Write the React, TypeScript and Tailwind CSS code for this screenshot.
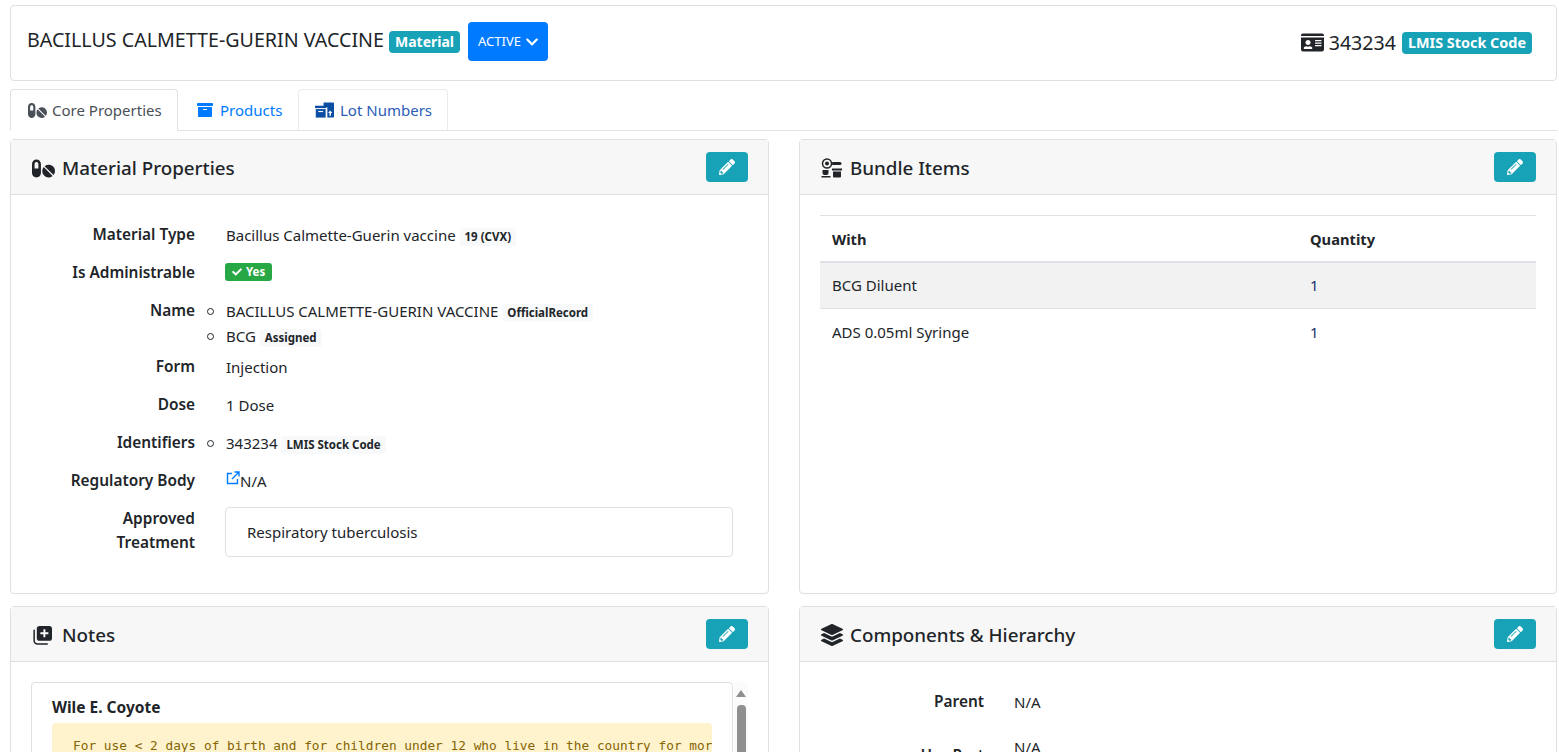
import React from 'react';
import { FaPills, FaArchive, FaPencilAlt, FaIdCard, FaLayerGroup, FaCheck, FaChevronDown } from 'react-icons/fa';

const Tag: React.FC<{ children: React.ReactNode }> = ({ children }) => (
  <span className="inline-block rounded-[3px] bg-[#f8f9fa] px-[5px] text-[11.5px] font-bold leading-[18px] text-[#212529]">{children}</span>
);

const EditButton = () => (
  <button className="flex h-[30px] w-[42px] items-center justify-center rounded-[4px] bg-[#17a2b8] text-white">
    <FaPencilAlt className="text-[16px]" />
  </button>
);

const LotIcon = () => (
  <svg viewBox="0 0 20 16" className="h-[16px] w-[19px]" fill="#0b4ea2">
    <path d="M9 0h10a1 1 0 0 1 1 1v14a1 1 0 0 1-1 1h-6V5H9z" />
    <rect x="0" y="3.5" width="12" height="2.5" />
    <path d="M.8 7h10.4v9H.8z" />
    <rect x="3.5" y="9" width="5" height="1.2" fill="#fff" />
    <path d="M16 8.5l2.2 2.6h-1.4V14h-1.6v-2.9h-1.4z" fill="#fff" />
  </svg>
);

const BundleIcon = () => (
  <svg viewBox="0 0 22 20" className="h-[20px] w-[22px]" fill="#212529">
    <circle cx="6" cy="5.5" r="4.5" fill="none" stroke="#212529" strokeWidth="1.5" />
    <circle cx="6" cy="5.5" r="2" />
    <rect x="10.5" y="4" width="10" height="3" rx="1.5" />
    <path d="M1.5 12h6v3a2 2 0 0 1-2 2h-2a2 2 0 0 1-2-2z" />
    <rect x="0.5" y="18" width="9" height="1.5" />
    <rect x="11" y="10.5" width="10" height="2" />
    <path d="M12 13.5h8v5a1 1 0 0 1-1 1h-6a1 1 0 0 1-1-1z" />
  </svg>
);

const NotesIcon = () => (
  <svg viewBox="0 0 20 20" className="ml-[1px] mr-[3px] h-[19px] w-[19px]" fill="#212529">
    <path d="M1.2 4.5v11A3.5 3.5 0 0 0 4.7 19h10.3" fill="none" stroke="#212529" strokeWidth="1.6" strokeLinecap="round" />
    <path d="M7 0h10a3 3 0 0 1 3 3v9.5a3 3 0 0 1-3 3H7a3 3 0 0 1-3-3V3a3 3 0 0 1 3-3z" />
    <path d="M11 3.5h2v3.2h3.2v2H13v3.2h-2V8.700H7.800v-2H11z" fill="#fff" />
  </svg>
);

const ExternalIcon = () => (
  <svg viewBox="0 0 14 14" className="mt-[-6px] h-[14px] w-[14px] shrink-0" fill="none" stroke="#007bff" strokeWidth="1.4">
    <path d="M6 2.500H1.500v10h10V8" />
    <path d="M6 8l6.500-6.500M8.500 1h4.500v4.500" />
  </svg>
);

const Row: React.FC<{ label: React.ReactNode; className?: string; children: React.ReactNode }> = ({ label, className, children }) => (
  <div className={`flex ${className ?? 'mb-[14px]'}`}>
    <div className="w-[164px] shrink-0 text-right text-[15.4px] font-semibold leading-[24px] text-[#212529]">{label}</div>
    <div className="min-w-0 flex-1 pl-[31px] leading-[24px]">{children}</div>
  </div>
);

const ListItem: React.FC<{ children: React.ReactNode }> = ({ children }) => (
  <li className="relative h-[25px] leading-[24px]">
    <span className="absolute left-[-19px] top-[9px] h-[7px] w-[7px] rounded-full border border-[#212529]" />
    {children}
  </li>
);

const Card: React.FC<{ icon: React.ReactNode; title: string; className?: string; children: React.ReactNode }> = ({ icon, title, className, children }) => (
  <section className={`flex flex-col rounded-[4px] border border-[#dfdfdf] bg-white ${className ?? ''}`}>
    <header className="flex h-[55px] shrink-0 items-center justify-between border-b border-[#dfdfdf] bg-[#f7f7f7] pl-[21px] pr-[20px]">
      <h2 className="mt-[2px] flex items-center gap-[7px] text-[18.800px] font-medium text-[#212529]">
        {icon}
        {title}
      </h2>
      <EditButton />
    </header>
    {children}
  </section>
);

export default function App() {
  return (
    <div className="h-[752px] overflow-hidden bg-white pl-[10px] pr-[2px] pt-[5px] text-[15px] text-[#212529] [font-family:'Noto_Sans','Open_Sans',sans-serif]">
      {/* Title bar */}
      <div className="flex h-[76px] items-center justify-between rounded-[4px] border border-[#dfdfdf] pl-[16px] pr-[24px]">
        <div className="flex items-center pb-[3px]">
          <span className="-mt-[4px] text-[19.660px]">BACILLUS CALMETTE-GUERIN VACCINE</span>
          <span className="ml-[5px] rounded-[4px] bg-[#17a2b8] px-[6px] text-[14px] font-bold leading-[22px] text-white">Material</span>
          <button className="ml-[8px] flex h-[39px] w-[80px] items-center gap-[4px] rounded-[4px] bg-[#007bff] pl-[10px] text-[13px] text-white">
            ACTIVE <FaChevronDown className="text-[14px]" />
          </button>
        </div>
        <div className="flex items-center">
          <FaIdCard className="mr-[5px] text-[23px] text-[#212529]" />
          <span className="text-[19.600px]">343234</span>
          <span className="ml-[6px] rounded-[4px] bg-[#17a2b8] px-[6px] text-[14.400px] font-bold leading-[22px] text-white">LMIS Stock Code</span>
        </div>
      </div>

      {/* Tabs */}
      <div className="mt-[8px] flex h-[42px] border-b border-[#dee2e6] text-[15px]">
        <div className="-mb-px flex h-[42px] w-[168px] items-center gap-[5px] rounded-t-[4px] border border-b-white border-[#dee2e6] bg-white pl-[17px] text-[#495057]">
          <FaPills className="text-[19px]" /> Core Properties
        </div>
        <div className="flex h-[42px] w-[120px] items-center gap-[7px] pl-[19px] text-[#007bff]">
          <FaArchive className="text-[16px]" /> Products
        </div>
        <div className="flex h-[41px] w-[150px] items-center gap-[6px] rounded-t-[4px] border border-b-0 border-[#e9ecef] pl-[16px] text-[#2b5cb8]">
          <LotIcon /> Lot Numbers
        </div>
      </div>

      {/* Panels */}
      <div className="mt-[8px] grid grid-cols-[759px_758px] gap-x-[30px] gap-y-[12px]">
        <Card icon={<FaPills className="text-[23px]" />} title="Material Properties" className="h-[455px]">
          <div className="pl-[20px] pr-[35px] pt-[28px]">
            <Row label="Material Type">
              Bacillus Calmette-Guerin vaccine <Tag>19 (CVX)</Tag>
            </Row>
            <Row label="Is Administrable">
              <span className="-ml-[1px] inline-flex h-[18px] items-center gap-[4px] rounded-[3px] bg-[#28a745] px-[7px] align-[2px] text-[11.5px] font-bold text-white">
                <FaCheck className="text-[10px]" /> Yes
              </span>
            </Row>
            <Row label="Name" className="mb-[6px]">
              <ul>
                <ListItem>BACILLUS CALMETTE-GUERIN VACCINE <Tag>OfficialRecord</Tag></ListItem>
                <ListItem>BCG <Tag>Assigned</Tag></ListItem>
              </ul>
            </Row>
            <Row label="Form">Injection</Row>
            <Row label="Dose">1 Dose</Row>
            <Row label="Identifiers" className="mb-[13px]">
              <ul>
                <ListItem>343234 <Tag>LMIS Stock Code</Tag></ListItem>
              </ul>
            </Row>
            <Row label="Regulatory Body">
              <span className="flex items-center">
                <ExternalIcon />
                N/A
              </span>
            </Row>
            <Row label={<>Approved<br />Treatment</>} className="mb-0">
              <div className="-ml-[1px] flex h-[50px] items-center rounded-[4px] border border-[#dfdfdf] pl-[21px]">Respiratory tuberculosis</div>
            </Row>
          </div>
        </Card>

        <Card icon={<BundleIcon />} title="Bundle Items" className="h-[455px]">
          <div className="px-[20px] pt-[20px]">
            <table className="w-full border-t border-[#dee2e6]">
              <thead>
                <tr className="h-[46px] border-b-2 border-[#dee2e6] text-left text-[14.700px]">
                  <th className="w-[478px] pl-[12px] pt-[2px] font-bold">With</th>
                  <th className="pl-[12px] pt-[2px] font-bold">Quantity</th>
                </tr>
              </thead>
              <tbody>
                <tr className="h-[47px] border-b border-[#dee2e6] bg-[#f2f2f2]">
                  <td className="pl-[12px]">BCG Diluent</td>
                  <td className="pl-[12px] text-[#1a2f6b]">1</td>
                </tr>
                <tr className="h-[47px]">
                  <td className="pl-[12px]">ADS 0.05ml Syringe</td>
                  <td className="pl-[12px] text-[#1a2f6b]">1</td>
                </tr>
              </tbody>
            </table>
          </div>
        </Card>

        <Card icon={<NotesIcon />} title="Notes" className="h-[300px]">
          <div className="flex pl-[20px] pr-[20px] pt-[20px]">
            <div className="h-[260px] w-[702px] shrink-0 overflow-hidden rounded-[4px] border border-[#dfdfdf] px-[20px] pt-[12px]">
              <div className="text-[15.500px] font-bold leading-[24px]">Wile E. Coyote</div>
              <div className="mt-[4px] h-[200px] overflow-hidden whitespace-nowrap rounded-[4px] bg-[#fff3cd] pl-[21px] pt-[13px] text-[12.800px] leading-[19px] text-[#856404] [font-family:'DejaVu_Sans_Mono','Liberation_Mono',monospace]">
                For use &lt; 2 days of birth and for children under 12 who live in the country for more than 3 months
              </div>
            </div>
            <div className="ml-[1px] flex h-[260px] w-[14px] flex-col items-center bg-[#fbfbfb] pt-[8px]">
              <span className="h-0 w-0 border-x-[5px] border-b-[7px] border-x-transparent border-b-[#8f8f8f]" />
              <span className="mt-[8px] h-[120px] w-[9px] rounded-[4px] bg-[#8f8f8f]" />
            </div>
          </div>
        </Card>

        <Card icon={<FaLayerGroup className="text-[22px]" />} title="Components & Hierarchy" className="h-[300px]">
          <div className="flex flex-col pl-[20px] pt-[28px]">
            <div className="flex leading-[24px]">
              <div className="w-[164px] text-right text-[15.4px] font-semibold">Parent</div>
              <div className="pl-[30px]">N/A</div>
            </div>
            <div className="mt-[21px] flex leading-[24px]">
              <div className="mt-[9px] w-[164px] text-right text-[15.4px] font-semibold">Has Part</div>
              <div className="pl-[30px]">N/A</div>
            </div>
          </div>
        </Card>
      </div>
    </div>
  );
}
